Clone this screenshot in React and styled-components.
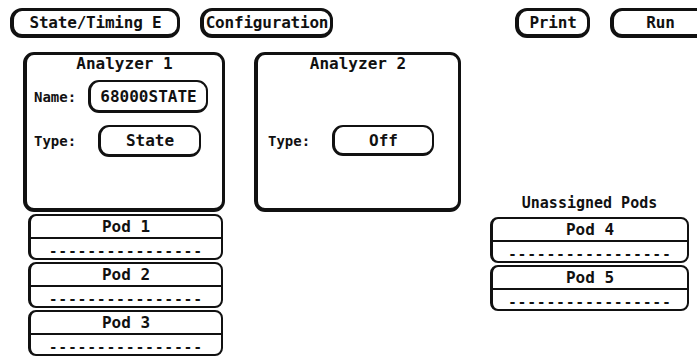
import React from 'react';
import styled, { createGlobalStyle } from 'styled-components';

const Global = createGlobalStyle`
  html, body { margin: 0; padding: 0; background: #fff; }
  body {
    width: 697px; height: 356px; overflow: hidden;
    font-family: "DejaVu Sans Mono", "Liberation Mono", monospace;
    color: #111;
  }
`;

const Screen = styled.div`
  width: 697px;
  height: 356px;
  overflow: hidden;
  background: #fff;
`;

const TopBar = styled.div`
  display: flex;
  justify-content: space-between;
  padding: 8px 0 0 10px;
  width: 710px;
  box-sizing: border-box;
`;

const Group = styled.div`
  display: flex;
  gap: 20px;
`;

const KeyButton = styled.div`
  box-sizing: border-box;
  width: ${p => p.$w}px;
  height: 30px;
  border: 3px solid #111;
  border-left-width: 4px;
  border-bottom-width: 4px;
  border-radius: 12px;
  display: flex;
  align-items: center;
  justify-content: center;
  font-weight: bold;
  font-size: 16px;
  letter-spacing: -0.2px;
  white-space: nowrap;
`;

const Main = styled.div`
  display: grid;
  grid-template-columns: 202px 207px 199px;
  grid-template-rows: 160px auto;
  column-gap: 29px;
  row-gap: 2px;
  padding: 14px 0 0 23px;
`;

const Analyzer = styled.div`
  box-sizing: border-box;
  height: 160px;
  border: 3px solid #111;
  border-left-width: 4px;
  border-bottom-width: 4px;
  border-radius: 11px;
  padding: 0 0 0 ${p => p.$pl}px;
  display: flex;
  flex-direction: column;
`;

const Title = styled.div`
  text-align: center;
  font-weight: bold;
  font-size: 16px;
  line-height: 18px;
  margin-left: -${p => p.$pl}px;
`;

const Row = styled.div`
  display: flex;
  align-items: center;
  margin-top: ${p => p.$mt}px;
`;

const Label = styled.div`
  font-weight: bold;
  font-size: 14px;
  width: 42px;
  white-space: nowrap;
`;

const Field = styled.div`
  box-sizing: border-box;
  margin-left: ${p => p.$ml}px;
  width: ${p => p.$w}px;
  height: ${p => p.$h}px;
  border: 2px solid #111;
  border-left-width: 3px;
  border-bottom-width: 3px;
  border-radius: 11px;
  display: flex;
  align-items: center;
  justify-content: center;
  font-weight: bold;
  font-size: 16px;
  white-space: nowrap;
`;

const PodList = styled.div`
  display: flex;
  flex-direction: column;
  gap: 2px;
  padding: ${p => p.$pt}px 0 0 ${p => p.$pl}px;
`;

const Pod = styled.div`
  box-sizing: border-box;
  width: ${p => p.$w}px;
  height: 46px;
  border: 2px solid #111;
  border-left-width: 3px;
  border-radius: 8px;
  display: flex;
  flex-direction: column;
`;

const PodHead = styled.div`
  height: 21px;
  border-bottom: 2px solid #111;
  display: flex;
  align-items: center;
  justify-content: center;
  font-weight: bold;
  font-size: 16px;
`;

const PodBits = styled.div`
  flex: 1;
  display: flex;
  align-items: center;
  justify-content: center;
  padding-top: 5px;
  font-weight: bold;
  font-size: 14px;
  letter-spacing: 1.2px;
  line-height: 14px;
  white-space: nowrap;
  overflow: hidden;
`;

const Heading = styled.div`
  align-self: end;
  text-align: center;
  font-weight: bold;
  font-size: 15px;
  line-height: 18px;
`;

const PodBox = ({ n, w, dashes }) => (
  <Pod $w={w}>
    <PodHead>Pod {n}</PodHead>
    <PodBits>{'-'.repeat(dashes)}</PodBits>
  </Pod>
);

export default function App() {
  return (
    <Screen>
      <Global />
      <TopBar>
        <Group>
          <KeyButton $w={170}>State/Timing E</KeyButton>
          <KeyButton $w={133}>Configuration</KeyButton>
        </Group>
        <Group>
          <KeyButton $w={75}>Print</KeyButton>
          <KeyButton $w={100}>Run</KeyButton>
        </Group>
      </TopBar>
      <Main>
        <Analyzer $pl={7}>
          <Title $pl={7}>Analyzer 1</Title>
          <Row $mt={7}>
            <Label>Name:</Label>
            <Field $ml={12} $w={120} $h={33}>68000STATE</Field>
          </Row>
          <Row $mt={12}>
            <Label>Type:</Label>
            <Field $ml={22} $w={103} $h={32}>State</Field>
          </Row>
        </Analyzer>
        <Analyzer $pl={10}>
          <Title $pl={10}>Analyzer 2</Title>
          <Row $mt={52}>
            <Label>Type:</Label>
            <Field $ml={22} $w={102} $h={31}>Off</Field>
          </Row>
        </Analyzer>
        <Heading>Unassigned Pods</Heading>
        <PodList $pt={0} $pl={5}>
          <PodBox n={1} w={195} dashes={16} />
          <PodBox n={2} w={195} dashes={16} />
          <PodBox n={3} w={195} dashes={16} />
        </PodList>
        <div />
        <PodList $pt={3} $pl={0}>
          <PodBox n={4} w={199} dashes={17} />
          <PodBox n={5} w={199} dashes={17} />
        </PodList>
      </Main>
    </Screen>
  );
}
